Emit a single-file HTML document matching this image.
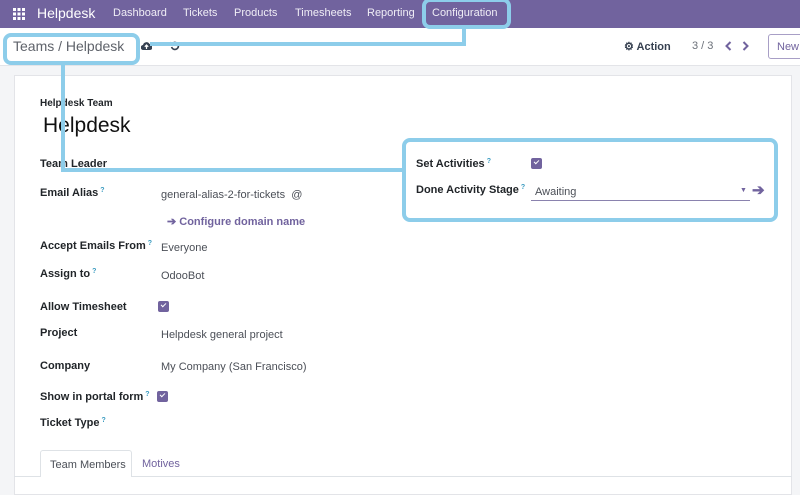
<!DOCTYPE html>
<html><head><meta charset="utf-8"><style>
*{margin:0;padding:0;box-sizing:border-box}
body{width:800px;height:488px;overflow:hidden;background:#f4f5f7;font-family:"Liberation Sans",sans-serif;position:relative;color:#212529}
.a{position:absolute;white-space:nowrap}
.nav{position:absolute;left:0;top:0;width:800px;height:28px;background:#71639e;color:#fff}
.nav .a{top:7px;font-size:11px;color:#f0eef6}
.cp{position:absolute;left:0;top:28px;width:800px;height:38px;background:#fff;border-bottom:1px solid #e3e4e8}
.sheet{position:absolute;left:14px;top:75px;width:778px;height:420px;background:#fff;border:1px solid #e3e4e8}
.l{font-size:11px;font-weight:bold;color:#212529}
.v{font-size:11px;color:#4b4f57}
sup{color:#3a9bc0;font-size:7px;font-weight:bold;vertical-align:top;margin-left:2px}
.cb{position:absolute;width:11px;height:11px;background:#71639e;border-radius:2px}
.cb:after{content:"";position:absolute;left:3px;top:2px;width:4px;height:2px;border-left:1.5px solid #fff;border-bottom:1.5px solid #fff;transform:rotate(-45deg)}
.hl{position:absolute;border:4px solid #8dcdea;border-radius:8px}
.ln{position:absolute;background:#8dcdea}
</style></head><body>
<div class="nav">
<svg class="a" style="left:13px;top:8px" width="12" height="12" viewBox="0 0 12 12" fill="#fff"><rect x="0" y="0" width="3" height="3"/><rect x="4.5" y="0" width="3" height="3"/><rect x="9" y="0" width="3" height="3"/><rect x="0" y="4.5" width="3" height="3"/><rect x="4.5" y="4.5" width="3" height="3"/><rect x="9" y="4.5" width="3" height="3"/><rect x="0" y="9" width="3" height="3"/><rect x="4.5" y="9" width="3" height="3"/><rect x="9" y="9" width="3" height="3"/></svg>
<div class="a" style="left:37px;top:5px;font-size:14px;color:#fff">Helpdesk</div>
<div class="a" style="left:113px">Dashboard</div>
<div class="a" style="left:183px">Tickets</div>
<div class="a" style="left:234px">Products</div>
<div class="a" style="left:295px">Timesheets</div>
<div class="a" style="left:367px">Reporting</div>
<div class="a" style="left:432px">Configuration</div>
</div>
<div class="cp">
<div class="a" style="left:13px;top:10px;font-size:14px;color:#5f636b">Teams / Helpdesk</div>
<svg class="a" style="left:141px;top:14px" width="11" height="8" viewBox="0 0 11 8"><path d="M2.5 8A2.5 2.5 0 0 1 2 3a3.5 3.5 0 0 1 6.5-1A3 3 0 0 1 9 8Z" fill="#374151"/><path d="M5.5 3v4M3.8 4.8 5.5 3l1.7 1.8" stroke="#fff" stroke-width="1.2" fill="none"/></svg>
<svg class="a" style="left:170px;top:13px" width="10" height="10" viewBox="0 0 10 10"><path d="M2 3A3.5 3.5 0 1 1 1.6 6" stroke="#374151" stroke-width="1.6" fill="none"/><path d="M0.5 0.8 1 4 4 3.2Z" fill="#374151"/></svg>
<div class="a" style="left:624px;top:12px;font-size:11px;font-weight:bold;color:#374151">⚙ Action</div>
<div class="a" style="left:692px;top:12px;font-size:11px;color:#6b7079">3 / 3</div>
<svg class="a" style="left:725px;top:13px" width="7" height="10" viewBox="0 0 7 10"><path d="M5.5 1 1.5 5l4 4" stroke="#71639e" stroke-width="2" fill="none"/></svg>
<svg class="a" style="left:742px;top:13px" width="7" height="10" viewBox="0 0 7 10"><path d="M1.5 1l4 4-4 4" stroke="#71639e" stroke-width="2" fill="none"/></svg>
<div class="a" style="left:768px;top:6px;width:40px;height:25px;border:1px solid #a89fc6;border-radius:3px;font-size:11px;color:#71639e;padding:6px 0 0 8px">New</div>
</div>
<div class="sheet"></div>
<div class="a l" style="left:40px;top:98px;font-size:10px">Helpdesk Team</div>
<div class="a" style="left:43px;top:114px;font-size:21px;color:#111">Helpdesk</div>
<div class="a l" style="left:40px;top:158px">Team Leader</div>
<div class="a l" style="left:40px;top:187px">Email Alias<sup>?</sup></div>
<div class="a v" style="left:161px;top:189px">general-alias-2-for-tickets&nbsp; @</div>
<div class="a" style="left:167px;top:215px;font-size:11px;font-weight:bold;color:#71639e">➔ Configure domain name</div>
<div class="a l" style="left:40px;top:240px">Accept Emails From<sup>?</sup></div>
<div class="a v" style="left:161px;top:242px">Everyone</div>
<div class="a l" style="left:40px;top:268px">Assign to<sup>?</sup></div>
<div class="a v" style="left:161px;top:270px">OdooBot</div>
<div class="a l" style="left:40px;top:301px">Allow Timesheet</div>
<div class="cb" style="left:158px;top:301px"></div>
<div class="a l" style="left:40px;top:327px">Project</div>
<div class="a v" style="left:161px;top:329px">Helpdesk general project</div>
<div class="a l" style="left:40px;top:360px">Company</div>
<div class="a v" style="left:161px;top:361px">My Company (San Francisco)</div>
<div class="a l" style="left:40px;top:391px">Show in portal form<sup>?</sup></div>
<div class="cb" style="left:157px;top:391px"></div>
<div class="a l" style="left:40px;top:417px">Ticket Type<sup>?</sup></div>
<div class="a" style="left:14px;top:476px;width:778px;border-top:1px solid #dee2e6"></div>
<div class="a" style="left:40px;top:450px;width:92px;height:27px;background:#fff;border:1px solid #dee2e6;border-bottom:none;border-radius:3px 3px 0 0;font-size:11px;color:#4b4f57;padding:8px 0 0 9px">Team Members</div>
<div class="a" style="left:142px;top:458px;font-size:11px;color:#71639e">Motives</div>
<div class="a l" style="left:416px;top:158px">Set Activities<sup>?</sup></div>
<div class="cb" style="left:531px;top:158px"></div>
<div class="a l" style="left:416px;top:184px">Done Activity Stage<sup>?</sup></div>
<div class="a v" style="left:535px;top:186px">Awaiting</div>
<div class="a" style="left:531px;top:200px;width:219px;border-top:1px solid #8a82ae"></div>
<div class="a" style="left:740px;top:187px;font-size:7px;color:#71639e">▼</div>
<div class="a" style="left:752px;top:181px;font-size:15px;font-weight:bold;color:#71639e">➔</div>
<div class="hl" style="left:422px;top:-2px;width:89px;height:31px"></div>
<div class="hl" style="left:3px;top:33px;width:137px;height:32px"></div>
<div class="hl" style="left:402px;top:138px;width:376px;height:84px"></div>
<div class="ln" style="left:462px;top:28px;width:4px;height:17px"></div>
<div class="ln" style="left:150px;top:42px;width:316px;height:4px"></div>
<div class="ln" style="left:61px;top:64px;width:4px;height:108px"></div>
<div class="ln" style="left:61px;top:168px;width:343px;height:4px"></div>
</body></html>
